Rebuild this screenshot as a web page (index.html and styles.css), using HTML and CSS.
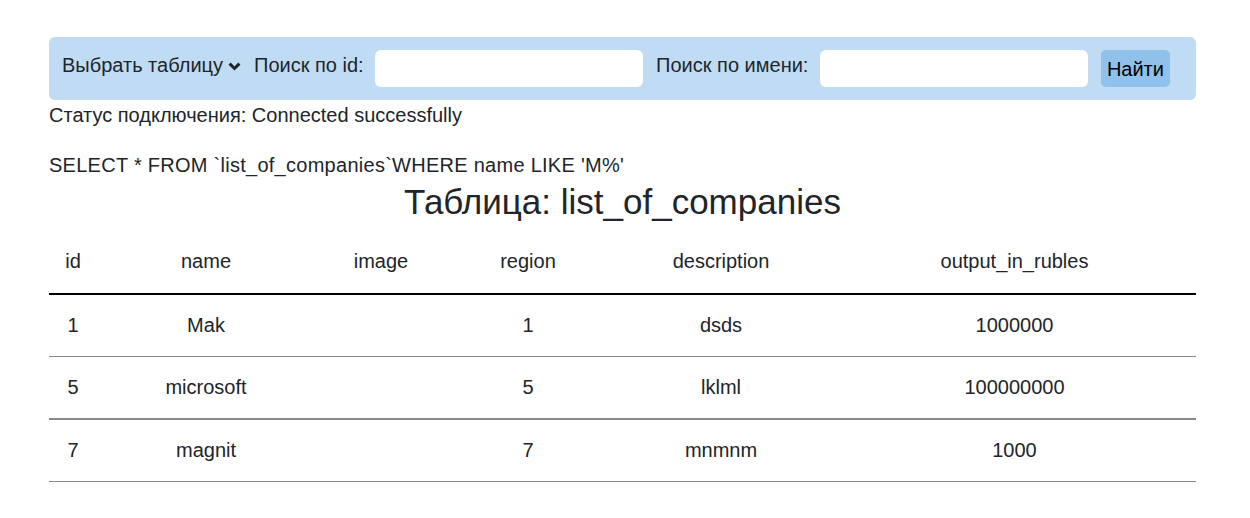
FILE: index.html
```html
<!DOCTYPE html>
<html lang="ru">
<head>
<meta charset="utf-8">
<title>list_of_companies</title>
<link rel="stylesheet" href="styles.css">
</head>
<body>
<div class="page">
  <form class="nav">
    <div class="select-wrap">
      <select class="table-select">
        <option>Выбрать таблицу</option>
      </select>
      <svg class="chev" width="13" height="9" viewBox="0 0 13 9"><path d="M1.6 1.6 L6.5 6.5 L11.4 1.6" fill="none" stroke="#212529" stroke-width="3"/></svg>
    </div>
    <label class="lbl">Поиск по id:</label>
    <input class="field" type="text">
    <label class="lbl">Поиск по имени:</label>
    <input class="field" type="text">
    <button class="btn" type="button">Найти</button>
  </form>
  <p class="status">Статус подключения: Connected successfully</p>
  <p class="query">SELECT * FROM `list_of_companies`WHERE name LIKE 'M%'</p>
  <h2 class="title">Таблица: list_of_companies</h2>
  <table class="data">
    <colgroup>
      <col class="c1"><col class="c2"><col class="c3"><col class="c4"><col class="c5"><col class="c6">
    </colgroup>
    <thead>
      <tr><th>id</th><th>name</th><th>image</th><th>region</th><th>description</th><th>output_in_rubles</th></tr>
    </thead>
    <tbody>
      <tr><td>1</td><td>Mak</td><td></td><td>1</td><td>dsds</td><td>1000000</td></tr>
      <tr class="thick"><td>5</td><td>microsoft</td><td></td><td>5</td><td>lklml</td><td>100000000</td></tr>
      <tr><td>7</td><td>magnit</td><td></td><td>7</td><td>mnmnm</td><td>1000</td></tr>
    </tbody>
  </table>
</div>
</body>
</html>
```
FILE: styles.css
```css
html, body {
  margin: 0;
  padding: 0;
  background: #fff;
}
body {
  font-family: "Liberation Sans", Arial, sans-serif;
  font-size: 20px;
  color: #212529;
}
.page {
  width: 1147px;
  margin-left: 49px;
  padding-top: 37px;
}
.nav {
  display: flex;
  align-items: center;
  gap: 13px;
  height: 63px;
  box-sizing: border-box;
  padding: 0 13px;
  background: #c0dcf4;
  border-radius: 6px;
}
.select-wrap {
  display: flex;
  align-items: center;
  gap: 4px;
  padding-bottom: 7px;
}
.table-select {
  appearance: none;
  -webkit-appearance: none;
  border: none;
  background: transparent;
  font-family: inherit;
  font-size: 20px;
  color: #212529;
  padding: 0;
  margin: 0;
}
.chev {
  display: block;
  margin-top: 2px;
}
.lbl {
  padding-bottom: 7px;
  line-height: 24px;
  margin-right: -1.5px;
}
.field {
  width: 268px;
  height: 37px;
  box-sizing: border-box;
  border: none;
  border-radius: 6px;
  background: #fff;
  margin: 0;
  padding: 0 8px;
  font-size: 20px;
}
.btn {
  height: 37px;
  width: 69px;
  border: none;
  border-radius: 5px;
  background: #8fc1ea;
  font-family: inherit;
  font-size: 20px;
  color: #000;
  padding: 2px 0 0;
}
.status {
  margin: 3px 0 0;
  line-height: 24px;
}
.query {
  margin: 26px 0 0;
  line-height: 24px;
  letter-spacing: 0.27px;
}
.title {
  margin: 2px 0 0;
  font-size: 35px;
  font-weight: normal;
  line-height: 46px;
  text-align: center;
}
.data {
  margin-top: 5px;
  width: 1147px;
  border-collapse: separate;
  border-spacing: 0;
  table-layout: fixed;
}
.c1 { width: 48px; }
.c2 { width: 218px; }
.c3 { width: 132px; }
.c4 { width: 162px; }
.c5 { width: 224px; }
.c6 { width: 363px; }
.data th, .data td {
  padding: 0;
  text-align: center;
  vertical-align: middle;
  font-weight: normal;
}
.data th {
  height: 63px;
  border-bottom: 2px solid #000;
}
.data td {
  height: 61px;
  border-bottom: 1px solid #888;
}
.data tr.thick td {
  border-bottom-width: 2px;
}
```
